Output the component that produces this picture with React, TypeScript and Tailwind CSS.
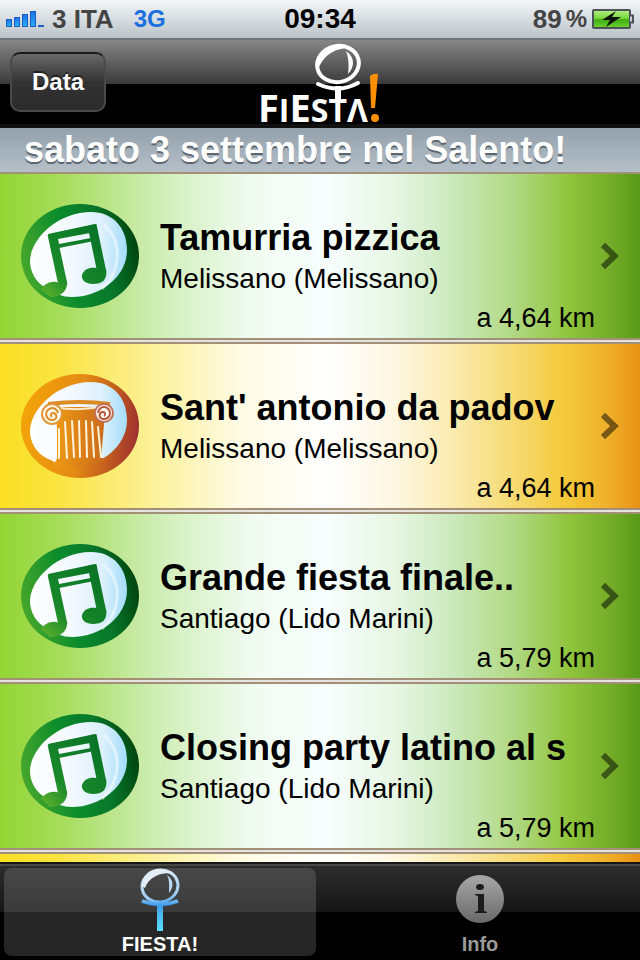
import { clsx } from 'clsx';

type Category = 'music' | 'culture';

interface EventItem {
  id: number;
  category: Category;
  title: string;
  place: string;
  distance: string;
}

const events: EventItem[] = [
  { id: 1, category: 'music', title: 'Tamurria pizzica', place: 'Melissano (Melissano)', distance: 'a 4,64 km' },
  { id: 2, category: 'culture', title: "Sant' antonio da padov", place: 'Melissano (Melissano)', distance: 'a 4,64 km' },
  { id: 3, category: 'music', title: 'Grande fiesta finale..', place: 'Santiago (Lido Marini)', distance: 'a 5,79 km' },
  { id: 4, category: 'music', title: 'Closing party latino al s', place: 'Santiago (Lido Marini)', distance: 'a 5,79 km' },
];

const rowColors = {
  music:
    'bg-[linear-gradient(90deg,#93d534_0%,#a5dc58_9%,#d0eeb8_25%,#f0fbf0_39%,#f7fefe_51%,#e6f6e2_62%,#cdeac0_70%,#b2d985_80%,#8fc43c_89%,#76ae2a_95%,#589a18_100%)]',
  culture:
    'bg-[linear-gradient(90deg,#fadf22_0%,#fae440_9%,#fcf2a0_25%,#fefae2_37%,#ffffff_51%,#fdf6e0_62%,#faecb4_70%,#f6da74_80%,#f4c93c_88%,#efb02a_95%,#e99114_100%)]',
};

function SignalBars() {
  return (
    <svg width="38" height="18" viewBox="0 0 38 18" aria-hidden="true">
      <defs>
        <linearGradient id="signal" x1="0" y1="0" x2="0" y2="1">
          <stop offset="0" stopColor="#1c72e8" />
          <stop offset="1" stopColor="#27b0fa" />
        </linearGradient>
      </defs>
      <g fill="url(#signal)" stroke="#1a5cc0" strokeWidth="1">
        <rect x="0.5" y="9.5" width="5" height="7" />
        <rect x="8.5" y="7.5" width="5" height="9" />
        <rect x="16.5" y="4.5" width="5" height="12" />
        <rect x="24.5" y="1.5" width="5" height="15" />
      </g>
      <rect x="32" y="15" width="6" height="2" fill="#1c5fc4" />
    </svg>
  );
}

function Battery() {
  return (
    <svg width="43" height="22" viewBox="0 0 43 22" aria-hidden="true">
      <defs>
        <linearGradient id="charge" x1="0" y1="0" x2="0" y2="1">
          <stop offset="0" stopColor="#b6ee8c" />
          <stop offset="0.45" stopColor="#7bd93c" />
          <stop offset="0.55" stopColor="#3fae12" />
          <stop offset="1" stopColor="#6fd62f" />
        </linearGradient>
      </defs>
      <rect x="2" y="2" width="37" height="18" rx="1" fill="url(#charge)" stroke="#4c5259" strokeWidth="2" />
      <path d="M39 7.500h3v7h-3" fill="#c9d0d5" stroke="#4c5259" strokeWidth="2" />
      <path d="M25 3 11 12h8l-4 7 15-10h-9z" fill="#0c1406" />
    </svg>
  );
}

function FiestaLogo() {
  return (
    <svg width="124" height="84" viewBox="0 0 124 84" className="overflow-visible" role="img" aria-label="FIESTA!">
      {/* crystal ball on its stand, the stem runs into the T */}
      <ellipse cx="80" cy="24" rx="21" ry="18" fill="none" stroke="#fff" strokeWidth="4" transform="rotate(-12 80 24)" />
      <path d="M58 24C59 9 78 0 94 8 80 7 67 13 61 27z" fill="#fff" />
      <path d="M88 11c9 6 9 16 2 23 1-8 1-15-2-23z" fill="#fff" />
      <path d="M60 44c13 6 27 6 40-1" fill="none" stroke="#fff" strokeWidth="4" strokeLinecap="round" />
      <path d="M80 46v14" stroke="#fff" strokeWidth="6" />
      <text y="82" fill="#fff" fontFamily="'Open Sans', 'Noto Sans', sans-serif" fontWeight="700">
        <tspan x="0" fontSize="38">F</tspan>
        <tspan fontSize="32">I</tspan>
        <tspan fontSize="38">E</tspan>
        <tspan fontSize="32">STΛ</tspan>
      </text>
      <path d="M112 36q4-3 8-2l-3 34h-4z" fill="#ff9000" />
      <circle cx="117" cy="78" r="4" fill="#ff9000" />
    </svg>
  );
}

function BadgeDefs() {
  return (
    <svg width="0" height="0" className="absolute" aria-hidden="true">
      <defs>
        <linearGradient id="musicRim" x1="0" y1="0.6" x2="1" y2="0.4">
          <stop offset="0" stopColor="#48a82c" />
          <stop offset="0.4" stopColor="#0b8c2c" />
          <stop offset="0.7" stopColor="#08762a" />
          <stop offset="1" stopColor="#00440f" />
        </linearGradient>
        <linearGradient id="cultureRim" x1="0" y1="0.4" x2="1" y2="0.5">
          <stop offset="0" stopColor="#f3a408" />
          <stop offset="0.5" stopColor="#e58a14" />
          <stop offset="0.75" stopColor="#c4601c" />
          <stop offset="1" stopColor="#9e3030" />
        </linearGradient>
        <linearGradient id="glass" x1="0" y1="0" x2="1" y2="0">
          <stop offset="0" stopColor="#ffffff" />
          <stop offset="0.4" stopColor="#f4f9ff" />
          <stop offset="0.75" stopColor="#dcf0fc" />
          <stop offset="1" stopColor="#a4dcfa" />
        </linearGradient>
        <linearGradient id="note" gradientUnits="userSpaceOnUse" x1="25" y1="90" x2="85" y2="30">
          <stop offset="0" stopColor="#55ad2c" />
          <stop offset="0.3" stopColor="#1a8a2a" />
          <stop offset="1" stopColor="#087226" />
        </linearGradient>
        <linearGradient id="shaft" x1="0" y1="0" x2="1" y2="0">
          <stop offset="0" stopColor="#ee9c14" />
          <stop offset="1" stopColor="#c8661c" />
        </linearGradient>
      </defs>
    </svg>
  );
}

const glassPath =
  'M10 60C9 37 37 9 71 9c22 0 36 16 36 38 0 27-27 47-55 47-10 0-15-3-21-7C20 84 11 73 10 60z';

function MusicBadge() {
  return (
    <svg width="120" height="106" viewBox="0 0 120 106" className="shrink-0" aria-hidden="true">
      <ellipse cx="60" cy="53" rx="59" ry="52" fill="url(#musicRim)" />
      <path d={glassPath} fill="url(#glass)" />
      <path d="M84 22c18 16 18 44-2 64" fill="none" stroke="#fff" strokeWidth="3" opacity="0.5" />
      {/* beam with its slot, then stems and heads */}
      <path d="M28 31 75 21 79 37 34 46zM38 36 39 41 71 35 70 30z" fillRule="evenodd" fill="url(#note)" />
      <g fill="none" stroke="url(#note)" strokeWidth="9">
        <path d="M32 31 43 82" />
        <path d="M72 22 82 70" />
      </g>
      <path d="M47 78c1 10-6 16-17 16l-9-8c4-6 12-9 18-6z" fill="url(#note)" />
      <path d="M86 66c2 11-4 15-13 15-7 0-12-4-11-9 2-7 11-9 17-6z" fill="url(#note)" />
    </svg>
  );
}

function CultureBadge() {
  return (
    <svg width="120" height="106" viewBox="0 0 120 106" className="shrink-0" aria-hidden="true">
      <ellipse cx="60" cy="53" rx="59" ry="52" fill="url(#cultureRim)" />
      <path d={glassPath} fill="url(#glass)" />
      <path d="M34 34h50v18l-3 33h8q-25 14-56 7l4-6V54z" fill="url(#shaft)" />
      <path d="M28 31q32-4 62 0" fill="none" stroke="#dc8a24" strokeWidth="4" />
      <path d="M34 34q26 5 50-1" fill="none" stroke="#fbe9cc" strokeWidth="2" />
      {/* volutes */}
      <g fill="#fffaf0" stroke="#e0983c" strokeWidth="2">
        <circle cx="32" cy="41" r="10" />
        <circle cx="84" cy="40" r="9" stroke="#c07058" />
      </g>
      <g fill="none" strokeWidth="2">
        <path d="M38 40a6 6 0 1 0-5 7c5-1 4-7 0-7-2 0-3 3-1 4" stroke="#dd8c26" />
        <path d="M78 40a6 6 0 1 1 5 6c-5-1-4-7 0-7 2 0 3 3 1 4" stroke="#b8563c" />
      </g>
      <path
        d="M39 56v29M45 49l2 36M52 48l2 36M59 48l1 36M66 48l1 36M72 49l2 35M78 54l3 30"
        stroke="#fff4dc"
        strokeWidth="2"
        strokeLinecap="round"
      />
    </svg>
  );
}

function Chevron() {
  return (
    <svg width="18" height="28" viewBox="0 0 18 28" aria-hidden="true">
      <path d="M2 3 13.500 14 2 25" fill="none" stroke="#000" strokeOpacity="0.5" strokeWidth="6" />
    </svg>
  );
}

function EventRow({ event }: { event: EventItem }) {
  return (
    <li className="h-[170px] shrink-0 border-b-2 border-[#e6e2df]">
      <a
        href={`#event-${event.id}`}
        className={clsx(
          'flex h-full items-center border-y-2 border-[#a39078] pl-5 text-black',
          rowColors[event.category]
        )}
      >
        {event.category === 'music' ? <MusicBadge /> : <CultureBadge />}
        <div className="min-w-0 flex-1 self-end pl-5">
          <h2 className="truncate text-[36px] leading-[44px] font-bold">{event.title}</h2>
          <p className="text-[28px] leading-[38px]">{event.place}</p>
          <p className="text-right text-[27px] leading-[40px]">{event.distance}</p>
        </div>
        <span className="w-[45px] shrink-0 pl-[6px]">
          <Chevron />
        </span>
      </a>
    </li>
  );
}

function BallIcon() {
  return (
    <svg width="40" height="64" viewBox="0 0 40 64" aria-hidden="true">
      <defs>
        <linearGradient id="ball" gradientUnits="userSpaceOnUse" x1="0" y1="0" x2="0" y2="64">
          <stop offset="0" stopColor="#e6f0fa" />
          <stop offset="0.45" stopColor="#9ccbf2" />
          <stop offset="0.58" stopColor="#3f9df0" />
          <stop offset="1" stopColor="#5ce4ff" />
        </linearGradient>
      </defs>
      <g fill="none" stroke="url(#ball)">
        <ellipse cx="20" cy="18" rx="18" ry="16" strokeWidth="3" transform="rotate(-10 20 18)" />
        <path d="M2 33q18 7 36 0" strokeWidth="4" />
      </g>
      <rect x="17" y="36" width="6" height="27" fill="url(#ball)" />
      <path d="M2 18C3 5 17-1 31 5 19 5 9 9 5 20z" fill="#e3eefa" />
      <path d="M27 7c7 5 7 12 2 18 0-6 1-12-2-18z" fill="#b9d9f5" />
    </svg>
  );
}

function InfoIcon() {
  return (
    <svg width="50" height="50" viewBox="0 0 50 50" aria-hidden="true">
      <defs>
        <linearGradient id="info" x1="0" y1="0" x2="0" y2="1">
          <stop offset="0" stopColor="#a8a8a8" />
          <stop offset="1" stopColor="#686868" />
        </linearGradient>
      </defs>
      <circle cx="25" cy="25" r="24" fill="url(#info)" />
      <ellipse cx="25" cy="13" rx="4" ry="3" fill="#1c1c1c" />
      <path d="M20 20h9v17l3 1v1H20v-1l3-1V22l-3-1z" fill="#1c1c1c" />
    </svg>
  );
}

export default function App() {
  return (
    <div className="flex h-screen flex-col overflow-hidden bg-black font-['Liberation_Sans',Arial,sans-serif]">
      <BadgeDefs />

      {/* Status bar */}
      <div className="grid h-10 shrink-0 grid-cols-3 items-center border-b-2 border-[#70777b] bg-linear-to-b from-[#f2f6f8] to-[#bcc4c9] px-[6px] text-[26px] leading-[38px] font-bold text-[#444444]">
        <div className="flex items-center gap-2">
          <SignalBars />
          <span>3 ITA</span>
          <span className="pl-3 text-[24px] text-[#1b70e0]">3G</span>
        </div>
        <span className="text-center text-[28px] text-black">09:34</span>
        <div className="flex items-center justify-end gap-1">
          <span>89</span>
          <span className="text-[24px]">%</span>
          <Battery />
        </div>
      </div>

      {/* Navigation bar */}
      <header className="grid h-[88px] shrink-0 grid-cols-3 items-center border-b-4 border-[#101010] bg-[linear-gradient(180deg,#868686_0%,#3b3b3b_52%,#000000_53%,#000000_100%)] px-[10px]">
        <button
          type="button"
          className="h-[60px] w-24 rounded-[10px] border-2 border-[#4a4a4a] border-t-[#1c1c1c] bg-linear-to-b from-[#6a6a6a] via-[#333333] to-[#2b2b2b] text-[24px] leading-8 font-bold text-white text-shadow-[0_-2px_0_#00000080]"
        >
          Data
        </button>
        <h1 className="flex justify-center">
          <FiestaLogo />
        </h1>
      </header>

      <main className="flex min-h-0 flex-1 flex-col">
        <h2 className="h-11 shrink-0 overflow-hidden bg-linear-to-b from-[#93a1ac] to-[#b5bfc8] px-6 text-[36px] leading-[44px] font-bold whitespace-nowrap text-white text-shadow-[0_2px_0_#5d666e]">
          sabato 3 settembre nel Salento!
        </h2>
        <ul className="flex min-h-0 flex-1 flex-col overflow-hidden">
          {events.map((event) => (
            <EventRow key={event.id} event={event} />
          ))}
          <li className={clsx('flex-1 border-t-2 border-[#a39078]', rowColors.culture)} />
        </ul>
      </main>

      {/* Tab bar */}
      <nav className="grid h-[98px] shrink-0 grid-cols-2 gap-2 border-t-2 border-[#161616] bg-[linear-gradient(180deg,#484848_0px,#484848_2px,#2d2d2d_2px,#161616_48px,#000000_48px)] p-1 text-[20px] leading-6 font-bold">
        <a
          href="#fiesta"
          aria-current="page"
          className="flex flex-col items-center justify-between rounded-lg bg-[linear-gradient(180deg,#484848_0px,#3a3a3a_44px,#262626_44px)] text-white"
        >
          <BallIcon />
          FIESTA!
        </a>
        <a href="#info" className="flex flex-col items-center justify-between pt-[6px] text-[#9a9a9a]">
          <InfoIcon />
          Info
        </a>
      </nav>
    </div>
  );
}
